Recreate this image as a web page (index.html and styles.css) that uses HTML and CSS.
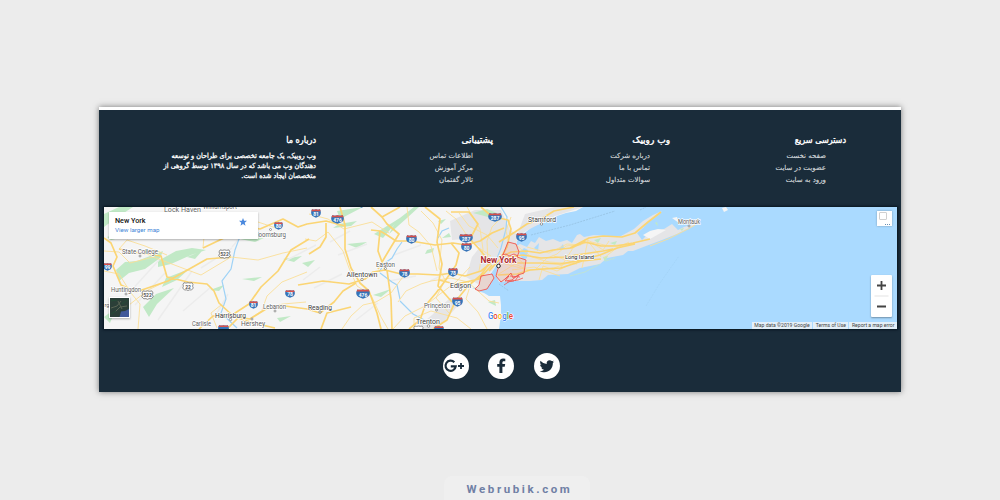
FILE: index.html
```
<!DOCTYPE html>
<html lang="fa" dir="rtl">
<head>
<meta charset="utf-8">
<title>Webrubik.com</title>
<link rel="stylesheet" href="styles.css">
</head>
<body>
<footer class="footer">
  <div class="columns">
    <section class="col quick"><h3>دسترسی سریع</h3><ul><li>صفحه نخست</li><li>عضویت در سایت</li><li>ورود به سایت</li></ul></section>
    <section class="col rubik"><h3>وب روبیک</h3><ul><li>درباره شرکت</li><li>تماس با ما</li><li>سوالات متداول</li></ul></section>
    <section class="col support"><h3>پشتیبانی</h3><ul><li>اطلاعات تماس</li><li>مرکز آموزش</li><li>تالار گفتمان</li></ul></section>
    <section class="col about"><h3>درباره ما</h3><p><span>وب روبیک، یک جامعه تخصصی برای طراحان و توسعه</span><span>دهندگان وب می باشد که در سال ۱۳۹۸ توسط گروهی از</span><span>متخصصان ایجاد شده است.</span></p></section>
  </div>
  <div class="map" dir="ltr">
    <svg class="canvas" viewBox="104 207 793 122" width="793" height="122">
      <defs>
        <symbol id="shield" viewBox="0 0 10 10" preserveAspectRatio="none"><path d="M1 .4Q3 1 5 .4Q7 1 9 .4Q11 5 8.500 7.700L5 9.800L1.500 7.700Q-1 5 1 .4Z" fill="#3674b8"/><path d="M1 .4Q3 1 5 .4Q7 1 9 .4L9.600 2.500H.4Z" fill="#d8504a"/></symbol>
        <symbol id="route" viewBox="0 0 12 9"><path d="M2 .7Q4 1.500 6 .7Q8 1.500 10 .7L11 2.500Q10 4 11.300 6L9.500 8Q7 7.500 6 8.500Q5 7.500 2.500 8L.7 6Q2 4 1 2.500Z" fill="#fff" stroke="#777" stroke-width=".8"/></symbol>
      </defs>
      <rect class="water" x="104" y="207" width="793" height="122"/>
      <path class="land" d="M104 207H583L576 211L566 213L557 216L549 219L543 223L533 226L527 231L521 236L517 241L516 246L508 247L502 255L498 263L494 269L488 278L480 286L478 291L484 293L489 296L500 296L501 305L501 315L499 329H104Z"/>
      <path class="urban" d="M450 221L475 210L501 210L510 230L520 236L515 245L503 254L493 270L478 284L466 277L472 257L480 247L465 239L452 240ZM525 214L555 207H583L555 216L526 231L516 238ZM421 324L432 315L450 298L461 302L448 317L437 329H414ZM478 226L496 225L505 236L485 251Z"/>
      <path class="urban" d="M498 264L501 257L513 248L520 244L527 247L531 241L535 243L539 237L546 241L553 239L560 242L567 240L572 243L577 235L580 234L584 237L594 235L608 236L621 236L634 229L643 221L653 215L662 211L655 217L649 221L643 228L637 233L642 240L651 231L664 229L672 224L678 230L684 227L698 223L691 227L677 234L662 240L646 246L633 251L628 251L623 255L607 258L600 264L580 268L568 274L548 275L542 280L530 281L512 281L499 282L496 276Z"/>
      <path class="land" d="M643 235L650 231L658 229L666 230L650 239ZM672 218L677 217L679 223ZM722 208l4-1 2 3-4 2z"/>
      <path class="waterfill" d="M519 253l5-5 4 2-1 8-4 2zM534 248l5-5-1 8zM558 250l5-6 1 4zM650 223l5-2-2 5zM472 288l16-2-8 5zM498 266l4-6 3 0-5 8z"/>
      <path class="borough" d="M508 242L516 244L519 252L517 257L526 260L524 273L518 275L501 282L496 276L499 265ZM481 276L492 274L494 278L487 289L479 291L475 289L479 285Z"/>
      <g class="park">
        <path d="M104 214L119 207H133L116 218L104 227ZM107 237l12-4 5 4-13 3zM116 270L125 262L137 261L163 251L160 258L145 269L129 273L119 281ZM158 261L176 251L192 248L206 250L191 255L171 264L158 267ZM166 278L189 269L177 280L162 287ZM143 307L156 294L174 288L157 304L149 317ZM187 257L202 251L195 259ZM210 290L224 285L219 291ZM104 317l12-9-6 15zM242 279l20-2-8 4zM240 239l24-1-9 4zM283 259l19-3-8 6zM396 221L414 207H419L407 218L389 234Z"/>
        <path d="M337 211l26-4-23 12zM339 224l18-3-6 5-18 2zM347 244l20-2-10 6zM302 263l13-3-7 7zM374 234l26-16-17 20zM373 295l18-6-10 8zM277 318l14-2-11 6zM427 250l7-2-1 4-8 2zM442 238l7-5 2 4zM473 213l14-4 10 4-9 4zM438 221l8-2-5 5zM488 302l7-2 1 6zM594 240l7-2-3 5zM610 243l7-2-2 4zM603 257l5-1-3 6zM655 223l2-1 1 4zM680 229l4-1-2 3zM571 256l5-2-3 4z"/>
      </g>
      <path class="terrain" d="M109 239L130 225M129 293L159 260M135 305L165 273M158 320L192 271M183 311L211 287M201 268L232 248M203 236L230 221M217 313L228 294M232 247L250 226M287 260L316 245M303 280L320 267M330 242L350 231M338 255L367 244M314 288L342 274M356 320L378 303M389 281L416 276M394 255L421 245M430 281L447 273"/>
      <path class="river" d="M255 225L239 239L235 250L231 269L222 281L226 299L221 313L237 328M379 272L385 263L392 258L397 249L402 242M380 273L392 282L397 285L400 299M400 301L413 314L430 323M501 207L507 217L506 229L501 248L496 261M438 238L442 231L449 228"/>
      <g class="minor">
        <path d="M104 251L119 252L130 263L153 257L164 261L185 269L201 275L231 257L258 260L283 253L307 248M104 271L119 274L131 293L140 304L138 329M119 249L127 240L145 246L167 255M151 238L158 229L153 221M104 306L129 305L148 290L165 282M203 248L205 225L224 219L238 227L258 222L276 228M217 328L211 313L221 305M307 272L282 282L267 296L262 310M249 319L266 308L283 304L306 302M305 239L316 241L328 232L343 251L349 268L357 286L371 295L381 317L388 329M342 329L351 316L363 305L376 302L391 293L405 274M309 214L328 219L344 229L372 222L389 233M407 207L409 225L419 232L431 246L437 271M421 211L433 223L442 240L439 268L445 280L436 298L449 313M393 329L405 316L425 306L440 294L456 282L470 267M398 302L406 291L421 284L431 281L451 278L468 282L489 301L499 303M414 329L414 318L431 311L457 318L471 329M471 283L466 299L478 312L487 329M446 211L456 219L468 237L479 248L491 256M459 213L469 226L487 235L498 248M467 207L480 229L483 249L479 271M501 218L492 227L487 241L488 263M511 217L506 231L509 243L501 260M514 255L524 264L523 275M515 244L522 250L532 257L549 262L577 264M505 264L529 270L554 268L573 261"/>
        <path d="M535 270L547 258L557 254L566 246L577 245L591 242L609 246L627 244M559 270L573 248L586 239L601 257M582 268L588 240L603 250L609 241M604 258L614 250L629 242M512 270L534 267L560 276M527 247L549 253L567 244L581 245M554 256L575 263M650 246L668 239L688 229L695 225M539 280L543 266L557 271L567 266M497 275L507 269L515 264L526 269"/>
      </g>
      <g class="major">
        <path d="M104 238L111 243L117 257L113 266L121 285L136 292M203 248L224 238L237 225L260 229L283 219L298 227L307 224L326 221L345 226M371 230L380 231L387 235L396 241L411 241L435 245L453 243L466 245L480 241L492 233L504 228"/>
        <path d="M119 249L139 253L161 256L167 277L188 282L207 284L214 291L219 303L232 315L249 304L261 287L278 271L291 250L309 239M136 292L168 281L207 259L231 257M199 329L213 316L230 316L250 319L266 309L285 306L307 309L320 313L334 302L343 291L356 283M298 285L323 281L349 284L365 279L373 272L385 270L401 274L418 274L438 275L452 273L465 276L481 271L491 263"/>
        <path d="M227 329L238 318L253 323L275 328M321 329L327 313L351 307M378 269L385 257L391 247L399 234L387 224L382 217L371 207M340 207L345 225L345 249L351 268L360 283L369 291L377 313L381 329M382 217L400 207M380 231L378 251L385 270M309 254L320 247L326 237L326 223M387 270L391 299L392 329M425 207L440 219L437 242L442 264L438 286L452 302M451 243L459 253L456 265L445 281L436 293L425 306L420 320L409 329"/>
        <path d="M451 212L469 212L478 224L470 239L480 250L490 262L481 275L468 286L455 302L447 320L433 329M439 280L455 284L466 282L479 279L492 265M481 207L489 214L499 218L508 220L511 229L507 247L500 259L489 271M499 242L515 232L527 224L541 219L554 211L574 207M502 257L511 252L526 251L540 253L553 250L571 248L585 242L601 246L617 246L633 243L650 239M509 263L526 263L541 263L560 264L577 261L600 255L617 248L635 244M508 257L523 255L541 258L564 257L583 254L603 251L613 249M498 275L517 274L530 270L544 269L561 268L582 261L601 259M570 248L589 238L603 236L622 237L635 233L648 222L661 212"/>
      </g>
      <path class="nyc" d="M508 242L516 244L519 252L517 257L526 260L524 273L518 275L512 280L505 281L509 276L501 282L496 276L499 265ZM481 276L492 274L494 278L487 289L479 291L475 289L479 285Z"/>
      <path class="ny-detail" d="M502 255l4-1 3 2 5-2 4 2M505 279l6-6 2 5 6-3-4 6M507 282l7-1M510 276l10 1M504 285l6-4 8-1 5-2"/>
      <path class="ferry" d="M499 284L509 291M531 235L570 225L615 211M640 210L646 207"/>
      <path class="ferry faint" d="M646 306L660 283L679 256"/>
      <path class="reef" d="M570 276L585 272L600 264M606 261L615 258"/>
      <g class="shields">
        <use href="#shield" x="103" y="263" width="9" height="8"/><use href="#shield" x="274" y="222" width="9" height="8"/><use href="#shield" x="249" y="301" width="9" height="8"/><use href="#shield" x="285" y="290" width="10" height="8"/><use href="#shield" x="218" y="325" width="11" height="8"/><use href="#shield" x="311" y="209" width="10" height="9"/><use href="#shield" x="331" y="215" width="13" height="9"/><use href="#shield" x="406" y="235" width="11" height="9"/><use href="#shield" x="399" y="269" width="11" height="9"/><use href="#shield" x="356" y="289" width="14" height="10"/><use href="#shield" x="448" y="268" width="10" height="9"/><use href="#shield" x="452" y="297" width="11" height="10"/><use href="#shield" x="459" y="234" width="14" height="9"/><use href="#shield" x="461" y="243" width="11" height="9"/><use href="#shield" x="488" y="213" width="14" height="9"/><use href="#shield" x="516" y="233" width="11" height="9"/><use href="#shield" x="357" y="200" width="9" height="8"/><use href="#shield" x="434" y="326" width="10" height="8"/>
        <use href="#route" x="218" y="249" width="13" height="10"/><use href="#route" x="182" y="282" width="12" height="9"/><use href="#route" x="141" y="290" width="13" height="10"/><use href="#route" x="413" y="325" width="11" height="9"/>
      </g>
      <g class="shield-text"><text x="107.500" y="269">99</text><text x="278.500" y="228">80</text><text x="253.500" y="307">81</text><text x="290" y="296">78</text><text x="316" y="216">81</text><text x="337.500" y="222">476</text><text x="411.500" y="242">80</text><text x="404.500" y="276">78</text><text x="363" y="297">476</text><text x="453" y="275">78</text><text x="457.500" y="305">95</text><text x="466" y="241">287</text><text x="466.500" y="250">80</text><text x="495" y="220">287</text><text x="521.500" y="240">95</text><g class="dark"><text x="224.500" y="256">522</text><text x="188" y="289">22</text><text x="147.500" y="297">522</text></g></g>
      <g class="places">
        <text x="164" y="212" textLength="37" lengthAdjust="spacingAndGlyphs">Lock Haven</text><text x="203" y="208.500" textLength="34" lengthAdjust="spacingAndGlyphs">Williamsport</text><text x="257" y="237" textLength="29" lengthAdjust="spacingAndGlyphs">loomsburg</text><text x="122" y="254" textLength="36" lengthAdjust="spacingAndGlyphs">State College</text><text x="111" y="292" textLength="30" lengthAdjust="spacingAndGlyphs">Huntingdon</text><text x="263" y="309" textLength="23" lengthAdjust="spacingAndGlyphs">Lebanon</text><text x="192" y="326" textLength="19" lengthAdjust="spacingAndGlyphs">Carlisle</text><text x="241" y="326" textLength="24" lengthAdjust="spacingAndGlyphs">Hershey</text><text x="376" y="267" textLength="19" lengthAdjust="spacingAndGlyphs">Easton</text><text x="424" y="308" textLength="26" lengthAdjust="spacingAndGlyphs">Princeton</text><text x="678" y="224" textLength="22" lengthAdjust="spacingAndGlyphs">Montauk</text><text x="104.500" y="307" font-size="5.500">rg</text>
        <g class="city"><text x="215" y="317.500" textLength="31" lengthAdjust="spacingAndGlyphs">Harrisburg</text><text x="346.500" y="276.500" textLength="31" lengthAdjust="spacingAndGlyphs">Allentown</text><text x="308" y="310" textLength="24" lengthAdjust="spacingAndGlyphs">Reading</text><text x="450" y="287.500" textLength="21" lengthAdjust="spacingAndGlyphs">Edison</text><text x="416" y="323.500" textLength="24" lengthAdjust="spacingAndGlyphs">Trenton</text><text x="528" y="221.500" textLength="28" lengthAdjust="spacingAndGlyphs">Stamford</text><text x="565" y="258.500" textLength="29" lengthAdjust="spacingAndGlyphs" class="region">Long Island</text></g>
        <text class="capital" x="480.500" y="262.500" textLength="36" lengthAdjust="spacingAndGlyphs">New York</text>
      </g>
      <g class="dots"><circle cx="140" cy="256" r="1"/><circle cx="270.500" cy="229.500" r="1"/><circle cx="126" cy="294" r="1"/><circle cx="275" cy="311" r="1"/><circle cx="252" cy="319" r="1"/><circle cx="230.500" cy="319.500" r="1.200"/><circle cx="385.500" cy="268.500" r="1"/><circle cx="362" cy="279.500" r="1.200"/><circle cx="320" cy="312" r="1.200"/><circle cx="460.500" cy="289.500" r="1.200"/><circle cx="436.500" cy="310" r="1"/><circle cx="428.500" cy="326" r="1.300"/><circle cx="541.500" cy="224" r="1.200"/><circle cx="689" cy="226" r="1"/><circle class="ny" cx="498.500" cy="266" r="1.800"/></g>
      <text class="google" x="488" y="319" textLength="25" lengthAdjust="spacingAndGlyphs"><tspan fill="#4285f4">G</tspan><tspan fill="#ea4335">o</tspan><tspan fill="#fbbc05">o</tspan><tspan fill="#4285f4">g</tspan><tspan fill="#34a853">l</tspan><tspan fill="#ea4335">e</tspan></text>
    </svg>
    <div class="place-card"><div><b>New York</b><a>View larger map</a></div><svg width="8" height="8" viewBox="0 0 20 20"><path fill="#4a88dd" d="M10 0L12.700 7H20L14.200 11.700L16.300 19.500L10 15L3.700 19.500L5.800 11.700L0 7H7.300Z"/></svg></div>
    <svg class="satellite" viewBox="0 0 21 21" width="21" height="21"><rect width="21" height="21" fill="#fff"/><path fill="#2b3f38" d="M1 1h19v19H1z"/><path fill="#41599a" d="M20 12L16 14L12 14.500L10.500 20H20Z"/><path stroke="#596454" fill="none" d="M2 11l6-2 4-5M6 15l5-5 7-1M9 4l4 8"/><path stroke="#244c37" fill="none" d="M2 4l6-1M2 17l5-3M13 7l5-4"/></svg>
    <div class="full"><i></i><span></span></div>
    <div class="zoom"><svg width="21" height="42" viewBox="0 0 21 42"><path fill="none" stroke="#444" stroke-width="1.800" d="M6 10.500h9M10.500 6v9M6 31.500h9"/><path stroke="#e3e3e3" d="M3.500 21h14"/></svg></div>
    <div class="legal"><span>Map data ©2019 Google</span><span>Terms of Use</span><span>Report a map error</span></div>
  </div>
  <div class="social" dir="ltr">
    <span><svg width="26" height="26" viewBox="0 0 26 26"><path class="gplus" d="M11.300 9.200A5.100 5.100 0 1 0 12.700 13.400H7.800"/><path class="plus" d="M15 13h6M18 10v6"/></svg></span>
    <span><svg width="26" height="26" viewBox="0 0 26 26"><path d="M11.400 20V13.700H9.200V10.900H11.400V9.300C11.400 6.900 12.800 5.500 15.200 5.500L17.300 5.700V8.300H15.800C14.700 8.300 14.400 8.900 14.400 9.700V10.900H17.200L16.700 13.700H14.400V20Z"/></svg></span>
    <span><svg width="26" height="26" viewBox="0 0 26 26"><path transform="translate(-1.400 -2) scale(1.120)" d="M19.400 9.300a5 5 0 0 1-1.300 1.300c.2 5.300-3.600 8.400-7.500 8.400-1.600 0-3.100-.4-4.300-1.200 1.500.2 2.900-.3 3.900-1.100-1.200 0-2.200-.8-2.500-1.900h1.200c-1.300-.3-2.200-1.400-2.200-2.700.4.200.8.300 1.200.3-1.200-.9-1.500-2.400-.8-3.600 1.400 1.700 3.300 2.600 5.500 2.700-.4-1.800.9-3.300 2.600-3.300.8 0 1.400.3 1.900.8.600-.1 1.200-.3 1.700-.6-.2.600-.6 1.100-1.100 1.500.6-.1 1.100-.3 1.700-.6z"/></svg></span>
  </div>
</footer>
<div class="credit" dir="ltr">Webrubik.com</div>
</body>
</html>
```
FILE: styles.css
```
* { box-sizing: border-box; }
body { margin: 0; height: 500px; overflow: hidden; background: #ececec; display: flex; flex-direction: column; align-items: center; justify-content: space-between; padding-top: 107px; font-family: "DejaVu Sans", sans-serif; }
.footer { width: 802px; height: 285px; background: #1a2c3a; border-top: 3px solid #fff; box-shadow: 0 0 6px rgba(0,0,0,.5); padding: 0 4px 0 5px; }
.columns { display: grid; grid-template-columns: 176px 177px 177px 1fr; height: 97px; padding: 23px 51px 0 0; color: #fff; }
h3 { margin: 0; font-size: 9px; line-height: 14px; font-weight: 400; white-space: nowrap; -webkit-text-stroke: .4px #fff; transform: scaleX(.9); transform-origin: right; }
.rubik h3, .support h3 { transform: none; }
ul { list-style: none; margin: 3px 20px 0 0; padding: 0; color: #d8dcdf; font-size: 7px; line-height: 12px; white-space: nowrap; -webkit-text-stroke: .12px #d8dcdf; }
.about p { margin: 4px 0 0; font-size: 7px; line-height: 10px; -webkit-text-stroke: .3px #fff; transform: scaleX(.93); transform-origin: right; }
.about span { display: block; white-space: nowrap; }
.map { position: relative; width: 793px; height: 122px; box-shadow: 0 0 2px 1px #071520; overflow: visible; }
.canvas { display: block; overflow: hidden; font-family: Roboto, sans-serif; }
.water, .waterfill { fill: #aadaff; }
.land { fill: #f5f5f5; }
.urban, .borough { fill: #e5e5e7; }
.park { fill: #c1e9c6; }
.terrain { fill: none; stroke: #ececec; stroke-width: 1.5; }
.river { fill: none; stroke: #9ed2f6; stroke-width: 1.2; }
.minor { fill: none; stroke: #fbdf97; stroke-width: .9; stroke-linejoin: round; }
.major { fill: none; stroke: #fbd574; stroke-width: 1.7; stroke-linejoin: round; }
.nyc { fill: #f5a68b; fill-opacity: .25; stroke: #f0534e; stroke-width: .9; }
.ny-detail { fill: none; stroke: #f0534e; stroke-width: .8; }
.ferry { fill: none; stroke: #8eb8d7; stroke-width: .6; stroke-dasharray: 2 1; }
.ferry.faint { stroke: #a0d0f3; }
.reef { fill: none; stroke: #c4e5cc; stroke-width: .8; }
.shield-text { font-size: 5px; font-weight: 700; fill: #fff; text-anchor: middle; }
.shield-text .dark { fill: #555; }
.places { font-size: 7px; fill: #606060; stroke: #fff; stroke-width: 1.5px; paint-order: stroke; stroke-linejoin: round; }
.places .city { font-size: 8px; fill: #3c3c3c; }
.places .region { font-size: 6px; fill: #222; }
.places .capital { font-size: 9px; font-weight: 700; fill: #ad292d; }
.dots { fill: #fff; stroke: #777; stroke-width: .7; }
.dots .ny { stroke: #222; stroke-width: 1; }
.google { font-size: 9px; font-weight: 500; stroke: #fff; stroke-width: 1px; paint-order: stroke; }
.place-card { position: absolute; left: 5px; top: 5px; width: 149px; height: 27px; padding: 4px 11px 0 6px; background: #fff; box-shadow: 0 1px 2px rgba(0,0,0,.3); display: flex; justify-content: space-between; font-family: Roboto, sans-serif; }
.place-card b { display: block; font-size: 7.2px; line-height: 9px; font-weight: 500; color: #111; }
.place-card a { display: block; font-size: 6.2px; line-height: 10px; color: #4285d6; }
.place-card svg { margin-top: 2px; }
.satellite { position: absolute; left: 5px; top: 90px; box-shadow: 0 1px 2px rgba(0,0,0,.3); }
.full { position: absolute; left: 773px; top: 4px; width: 15px; height: 15px; background: #fff; box-shadow: 0 0 2px rgba(0,0,0,.3); padding: 1px 2px; }
.full i { display: block; width: 8px; height: 8px; border: 1px solid #d0d0d0; border-radius: 1px; }
.full span { display: block; width: 5px; margin: 4px 0 0 6px; border-bottom: 1px dotted #6991b5; }
.zoom { position: absolute; left: 767px; top: 68px; width: 21px; height: 42px; background: #fff; border-radius: 1px; box-shadow: 0 1px 2px rgba(0,0,0,.35); }
.legal { position: absolute; right: 0; bottom: 0; display: flex; gap: 1px; font: 5.1px/7px Roboto, sans-serif; color: #444; white-space: nowrap; }
.legal span { background: rgba(245,245,245,.75); padding: 0 2.5px; }
.social { display: flex; gap: 19.5px; justify-content: center; padding: 24px 0 0 1px; }
.social span { width: 26px; height: 26px; border-radius: 50%; background: #fff; overflow: hidden; }
.social svg { display: block; fill: #1a2c3a; }
.social .gplus { fill: none; stroke: #1a2c3a; stroke-width: 2.2; }
.social .plus { fill: none; stroke: #1a2c3a; stroke-width: 1.8; }
.credit { width: 146px; height: 24px; margin-left: 34px; padding-left: 5px; border-radius: 8px 8px 0 0; background: #efefef; color: #7080a5; text-align: center; font: 700 11.5px/27px Roboto, sans-serif; letter-spacing: 2.6px; }
```
